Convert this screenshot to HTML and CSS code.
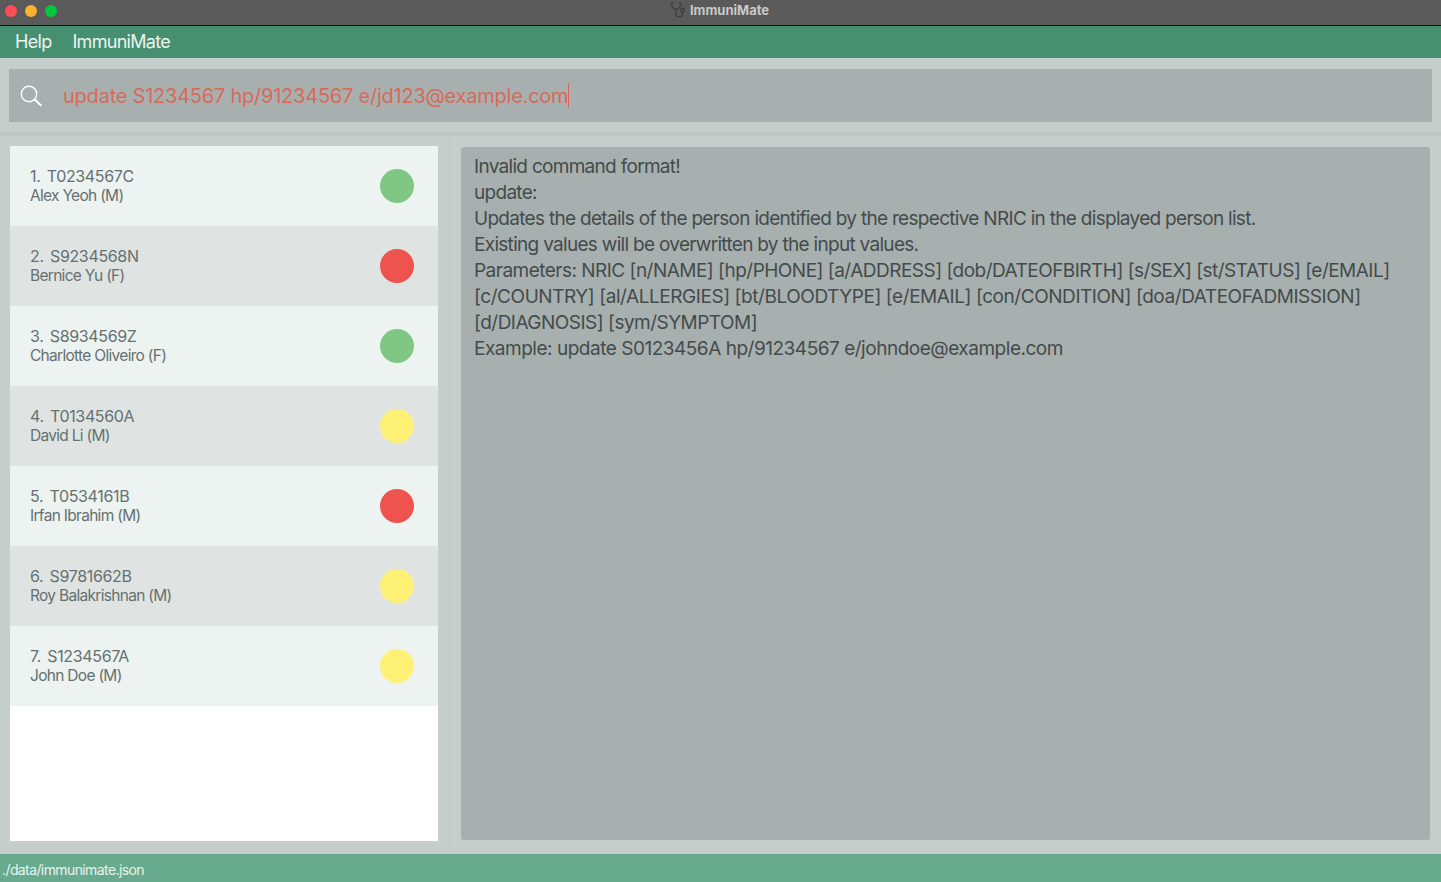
FILE: index.html
```html
<!DOCTYPE html>
<html lang="en">
<head>
<meta charset="utf-8">
<title>ImmuniMate</title>
<link rel="stylesheet" href="styles.css">
</head>
<body>
<div class="app">
  <header class="titlebar">
    <div class="lights"><span class="light red"></span><span class="light amber"></span><span class="light green"></span></div>
    <div class="wintitle">
      <svg class="steth" viewBox="0 0 16 16" width="16" height="16" fill="none" stroke="#3c3c3c" stroke-width="1.2" stroke-linecap="round"><path d="M3.5 1H2.4C1.6 1 1.2 1.6 1.5 2.6 2 4.6 3 7.2 6 7.2 9 7.2 10.2 4.6 10.8 2.6 11 1.6 10.6 1 9.8 1H9"/><path d="M6 7.2v4.3c0 2 1.3 3.2 3.2 3.2 2 0 3.2-1.2 3.2-3V10"/><circle cx="12.5" cy="8.2" r="1.8"/></svg>
      <span>ImmuniMate</span>
    </div>
  </header>
  <nav class="menubar"><span>Help</span><span>ImmuniMate</span></nav>
  <section class="commandzone">
    <div class="commandbox">
      <svg class="search" viewBox="0 0 24 24" width="24" height="24" fill="none" stroke="#fff" stroke-width="1.4" stroke-linecap="round"><circle cx="10" cy="10" r="7.7"/><path d="M15.8 15.6l6 5.6" stroke-width="2"/></svg>
      <span class="cmdtext">update S1234567 hp/91234567 e/jd123@example.com</span><span class="caret"></span>
    </div>
  </section>
  <main class="main">
    <div class="listpane">
      <ul class="list">
        <li class="card"><div><p class="nric">1.&nbsp; T0234567C</p><p class="name">Alex Yeoh (M)</p></div><span class="dot g"></span></li>
        <li class="card alt"><div><p class="nric">2.&nbsp; S9234568N</p><p class="name">Bernice Yu (F)</p></div><span class="dot r"></span></li>
        <li class="card"><div><p class="nric">3.&nbsp; S8934569Z</p><p class="name">Charlotte Oliveiro (F)</p></div><span class="dot g"></span></li>
        <li class="card alt"><div><p class="nric">4.&nbsp; T0134560A</p><p class="name">David Li (M)</p></div><span class="dot y"></span></li>
        <li class="card"><div><p class="nric">5.&nbsp; T0534161B</p><p class="name">Irfan Ibrahim (M)</p></div><span class="dot r"></span></li>
        <li class="card alt"><div><p class="nric">6.&nbsp; S9781662B</p><p class="name">Roy Balakrishnan (M)</p></div><span class="dot y"></span></li>
        <li class="card"><div><p class="nric">7.&nbsp; S1234567A</p><p class="name">John Doe (M)</p></div><span class="dot y"></span></li>
      </ul>
    </div>
    <div class="resultpane">
      <div class="result">
        <p>Invalid command format!</p>
        <p>update:</p>
        <p>Updates the details of the person identified by the respective NRIC in the displayed person list.</p>
        <p>Existing values will be overwritten by the input values.</p>
        <p class="params">Parameters: NRIC [n/NAME] [hp/PHONE] [a/ADDRESS] [dob/DATEOFBIRTH] [s/SEX] [st/STATUS] [e/EMAIL]</p>
        <p class="params wide">[c/COUNTRY] [al/ALLERGIES] [bt/BLOODTYPE] [e/EMAIL] [con/CONDITION] [doa/DATEOFADMISSION]</p>
        <p class="params">[d/DIAGNOSIS] [sym/SYMPTOM]</p>
        <p class="example">Example: update S0123456A hp/91234567 e/johndoe@example.com</p>
      </div>
    </div>
  </main>
  <footer class="status">./data/immunimate.json</footer>
</div>
</body>
</html>
```
FILE: styles.css
```css
* { box-sizing: border-box; margin: 0; padding: 0; }
html, body { height: 100%; overflow: hidden; }
body { font-family: Inter, "Liberation Sans", sans-serif; background: #c5cecb; }
.app { display: flex; flex-direction: column; height: 882px; }

.titlebar { height: 26px; background: #5a5a5a; border-bottom: 1px solid #111; display: flex; align-items: center; justify-content: center; position: relative; flex: none; }
.lights { position: absolute; left: 5px; top: 5px; display: flex; gap: 8px; }
.light { width: 12px; height: 12px; border-radius: 50%; }
.red { background: #fd4e53; }
.amber { background: #feb02f; }
.green { background: #03c73f; }
.wintitle { display: flex; align-items: center; gap: 4px; color: #c9c9c9; font-size: 13px; font-weight: 700; margin-left: -2px; margin-bottom: 5px; }
.steth { display: block; }

.menubar { height: 32px; background: #469071; color: #ecf3f0; font-size: 18px; letter-spacing: -0.7px; display: flex; align-items: center; gap: 21px; padding: 0 15px 2px; flex: none; }

.commandzone { height: 74px; padding: 11px 9px 10px; flex: none; }
.commandbox { height: 53px; background: #a7b0ae; display: flex; align-items: center; padding-left: 10px; }
.search { flex: none; margin-right: 20px; }
.cmdtext { color: #d96a59; font-size: 20px; letter-spacing: -0.23px; white-space: nowrap; }
.caret { width: 1px; height: 25px; background: #d96a59; }

.main { flex: 1; display: flex; border-top: 4px solid #bdc7c4; min-height: 0; }
.listpane { width: 450px; padding: 10px 11px 12px 10px; flex: none; border-right: 1px solid #bfc9c6; margin-bottom: 1px; }
.list { list-style: none; background: #fff; height: 695px; }
.card { height: 80px; background: #edf3f1; display: flex; align-items: center; justify-content: space-between; padding: 0 24px 0 20px; color: #667070; }
.card.alt { background: #dfe4e3; }
.nric { font-size: 16px; line-height: 20px; letter-spacing: -0.35px; word-spacing: -1px; }
.name { font-size: 15.5px; line-height: 20px; letter-spacing: -0.7px; }
.dot { width: 34px; height: 34px; border-radius: 50%; }
.dot.g { background: #81c784; }
.dot.r { background: #ef5350; }
.dot.y { background: #fff176; }

.resultpane { flex: 1; min-width: 0; padding: 11px 11px 13px; }
.result { height: 693px; background: #a7b0ae; border-radius: 3px; padding: 7px 13px; color: #444b4c; font-size: 19px; line-height: 26px; letter-spacing: -0.7px; }
.result p { white-space: nowrap; }
.result .params { letter-spacing: -0.52px; }
.result .params.wide { letter-spacing: -0.44px; }
.result .example { letter-spacing: -0.48px; }

.status { height: 28px; background: #68aa8d; color: #e9f3ef; font-size: 14px; letter-spacing: -0.6px; line-height: 32px; padding-left: 2px; flex: none; }
```
